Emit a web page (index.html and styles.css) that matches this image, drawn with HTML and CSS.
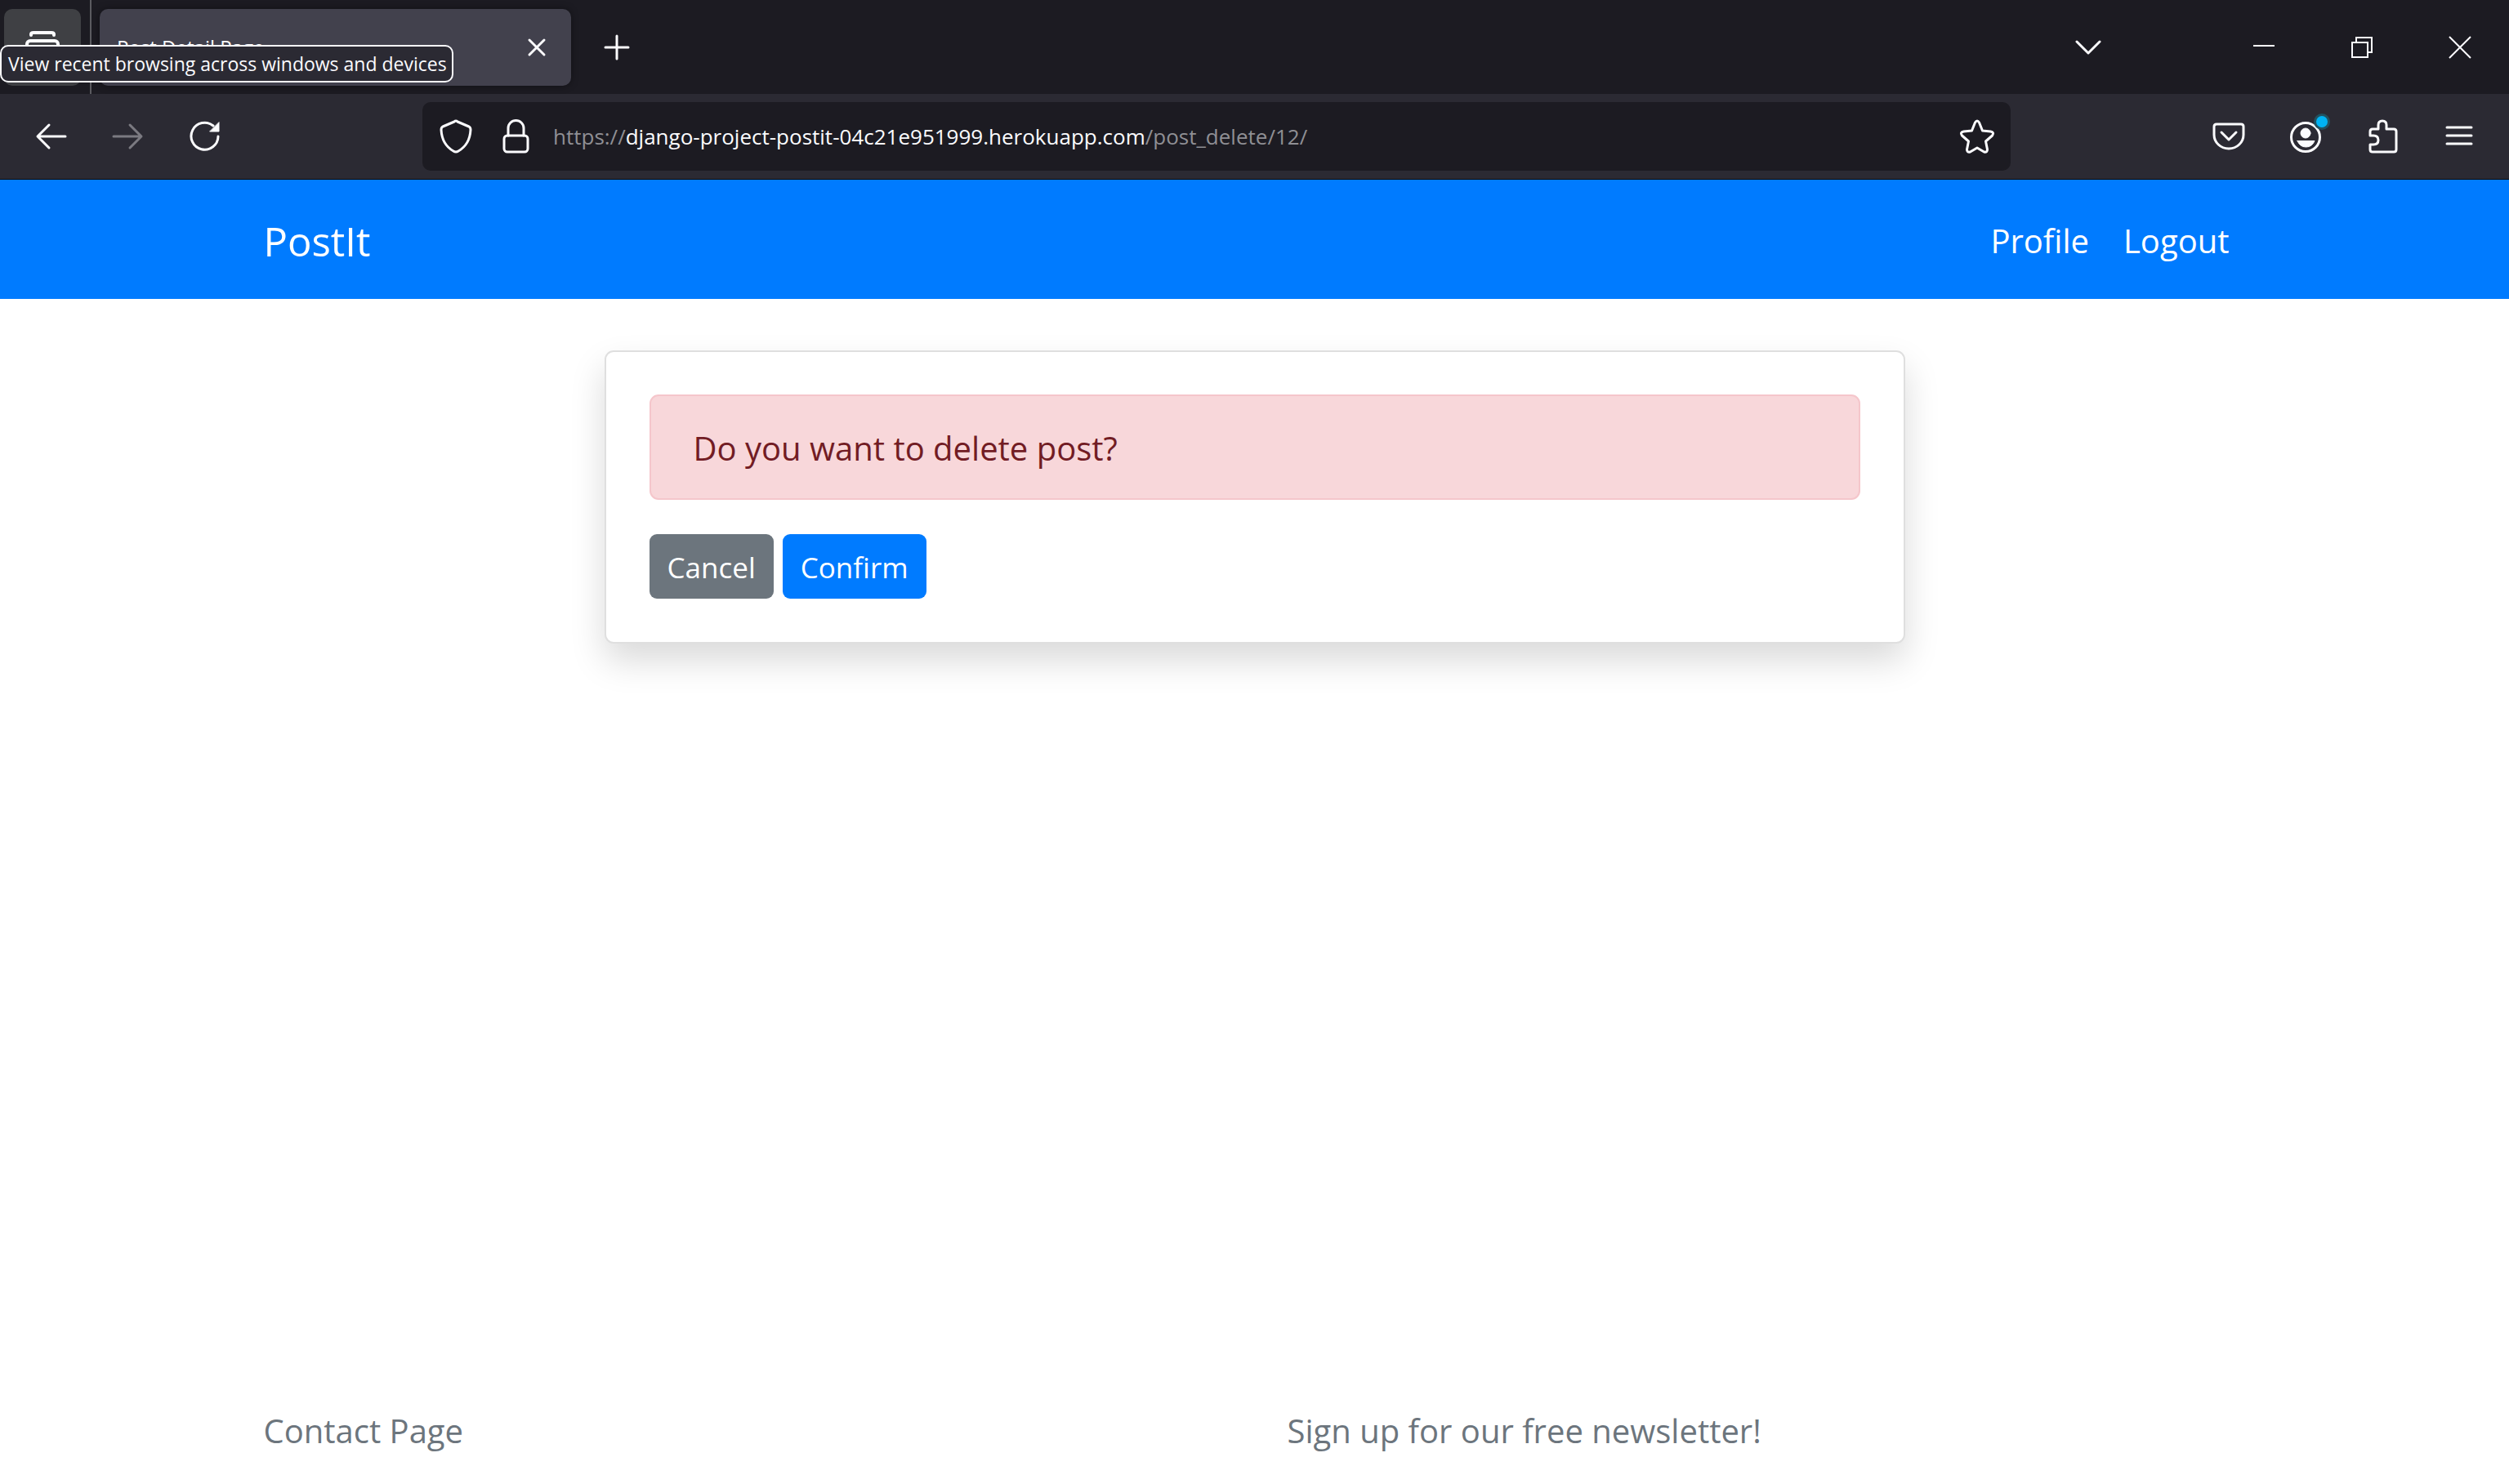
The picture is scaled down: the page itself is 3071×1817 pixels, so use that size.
FILE: index.html
```html
<!DOCTYPE html>
<html lang="en">
<head>
<meta charset="utf-8">
<title>Post Detail Page</title>
<link rel="stylesheet" href="styles.css">
</head>
<body>
<div class="browser">
  <div class="tabstrip">
    <button class="recent" aria-label="Recent browsing">
      <svg class="icon" viewBox="0 0 42 42"><path d="M7 6V5q0-2 3-2h22q3 0 3 2v1" /><rect x="2" y="13" width="38" height="27" rx="4"/></svg>
    </button>
    <div class="separator"></div>
    <div class="tab">
      <span class="tab-title">Post Detail Page</span>
      <button class="tab-close" aria-label="Close tab"><svg class="icon" viewBox="0 0 42 42"><path d="M12 12 30 30M30 12 12 30"/></svg></button>
    </div>
    <button class="tool" aria-label="New tab"><svg class="icon" viewBox="0 0 42 42"><path d="M21 7v28M7 21h28"/></svg></button>
    <button class="tool list-tabs" aria-label="List all tabs"><svg class="icon" viewBox="0 0 42 42"><path d="m7 14 14 14 14-14"/></svg></button>
    <div class="window-controls">
      <button class="window-button" aria-label="Minimize"><svg class="icon thin" viewBox="0 0 42 42"><path d="M8 19h26"/></svg></button>
      <button class="window-button" aria-label="Restore"><svg class="icon thin square" viewBox="0 0 42 42"><path d="M9 15h19v18H9zM14 15V9h19v18h-5"/></svg></button>
      <button class="window-button" aria-label="Close"><svg class="icon thin" viewBox="0 0 42 42"><path d="M8 8 34 34M34 8 8 34"/></svg></button>
    </div>
    <div class="tooltip" role="tooltip">View recent browsing across windows and devices</div>
  </div>
  <div class="toolbar">
    <button class="tool" aria-label="Back"><svg class="icon" viewBox="0 0 42 42"><path d="M38 21H5M18 7 4 21l14 14"/></svg></button>
    <button class="tool" aria-label="Forward" disabled><svg class="icon" viewBox="0 0 42 42"><path d="M3 21h33M23 7l14 14-14 14"/></svg></button>
    <button class="tool" aria-label="Reload"><svg class="icon" viewBox="0 0 42 42"><path d="M37 21A16.500 16.500 0 1 1 31 8"/><path class="solid" d="M38 4v11H27z"/></svg></button>
    <div class="urlbar">
      <button class="url-icon" aria-label="Tracking protection"><svg class="icon" viewBox="0 0 42 42"><path d="M21 2q1 0 2 1l14 6q2 1 2 4-1 18-15 26-3 2-6 0Q4 31 3 13q0-3 2-4l14-6q1-1 2-1z"/></svg></button>
      <button class="url-icon" aria-label="Site security"><svg class="icon" viewBox="0 0 42 42"><rect x="7" y="20" width="29" height="20" rx="4"/><path d="M12 20v-9a9.500 9.500 0 0 1 19 0v9"/></svg></button>
      <div class="url" role="textbox" aria-label="Address" contenteditable="true" spellcheck="false">https://<span class="domain">django-project-postit-04c21e951999.herokuapp.com</span>/post_delete/12/</div>
      <button class="url-icon" aria-label="Bookmark this page"><svg class="icon" viewBox="0 0 42 42"><path d="M18.500 4q2.500-4 5 0l4 10 10 1q5 1 2 5l-8 7 2 10q0 4-4 3l-8.500-5-8.500 5q-4 1-4-3l2-10-8-7q-3-4 2-5l10-1z"/></svg></button>
    </div>
    <button class="tool" aria-label="Save to Pocket"><svg class="icon" viewBox="0 0 42 42"><path d="M6 6h30q3 0 3 3v10a18 17 0 0 1-36 0V9q0-3 3-3z"/><path d="m12 16 9 9 9-9"/></svg></button>
    <button class="tool" aria-label="Account"><svg class="icon" viewBox="0 0 42 42"><circle cx="21" cy="22" r="17.500"/><circle class="solid" cx="21" cy="17" r="6"/><path class="solid" d="M11 26.500h21q-3 7.500-10.500 7.500T11 26.500z"/><circle class="halo" cx="41" cy="3" r="10"/><circle class="dot" cx="41" cy="3" r="7"/></svg></button>
    <button class="tool" aria-label="Extensions"><svg class="icon" viewBox="0 0 42 42"><path d="M6 20v-5q0-3 3-3h7V7q0-5 5-5t5 5v5h9q3 0 3 3v22q0 3-3 3H9q-3 0-3-3v-6h4q6 0 6-5.500T10 20z"/></svg></button>
    <button class="tool" aria-label="Open menu"><svg class="icon" viewBox="0 0 42 42"><path d="M6 10h30M6 20h30M6 30h30"/></svg></button>
  </div>
</div>
<nav class="navbar">
  <div class="container nav-row">
    <a class="brand" href="#">PostIt</a>
    <div class="nav-links"><a href="#">Profile</a><a href="#">Logout</a></div>
  </div>
</nav>
<main class="content">
  <form class="card">
    <div class="alert" role="alert">Do you want to delete post?</div>
    <div class="actions">
      <button type="button" class="btn secondary">Cancel</button>
      <button type="button" class="btn primary">Confirm</button>
    </div>
  </form>
</main>
<footer class="container footer-row">
  <a href="#">Contact Page</a>
  <a href="#">Sign up for our free newsletter!</a>
</footer>
</body>
</html>
```
FILE: styles.css
```css
* { box-sizing: border-box; }
body {
  margin: 0;
  min-height: 100vh;
  display: flex;
  flex-direction: column;
  background: #fff;
  font-family: "Open Sans", "Noto Sans", sans-serif;
  font-size: 40px;
  line-height: 64px;
  font-variant-ligatures: none;
}
button { border: 0; padding: 0; margin: 0; background: none; color: inherit; font: inherit; }
a { color: inherit; text-decoration: none; }

.browser { color: #fbfbfe; border-bottom: 1px solid #0c0c0d; }
.icon {
  display: block;
  width: 42px;
  height: 42px;
  flex: none;
  overflow: visible;
  fill: none;
  stroke: currentColor;
  stroke-width: 3;
  stroke-linecap: round;
  stroke-linejoin: round;
}
.icon.thin { stroke-width: 2; stroke-linecap: butt; }
.icon.square { stroke-linejoin: miter; }
.icon .solid { fill: currentColor; stroke-width: 1; }
.icon .halo { fill: #22515f; stroke: none; }
.icon .dot { fill: #00b3f4; stroke: none; }

.tabstrip {
  position: relative;
  display: flex;
  align-items: center;
  height: 115px;
  padding-left: 5px;
  background: #1c1b22;
}
.recent {
  display: flex;
  align-items: center;
  justify-content: center;
  width: 94px;
  height: 94px;
  border-radius: 10px;
  background: #3f4044;
}
.recent .icon { stroke-width: 4; }
.separator { width: 2px; align-self: stretch; margin: 0 10px 0 11px; background: #5b5b60; }
.tab {
  display: flex;
  align-items: center;
  justify-content: space-between;
  width: 577px;
  height: 94px;
  padding: 0 21px;
  border-radius: 10px;
  background: #42414d;
  box-shadow: 0 0 10px rgba(0, 0, 0, .4);
}
.tab-title { font-size: 24px; }
.tool {
  display: flex;
  align-items: center;
  justify-content: center;
  width: 94px;
  height: 84px;
}
.tool:disabled { color: #7b7a81; }
.tab + .tool { margin-left: 9px; }
.list-tabs { margin-left: auto; margin-right: 108px; }
.window-controls { display: flex; }
.window-button {
  display: flex;
  align-items: center;
  justify-content: center;
  width: 120px;
  height: 94px;
}
.tooltip {
  position: absolute;
  left: 0;
  top: 55px;
  padding: 1px 6px 0 8px;
  border: 2px solid #fbfbfe;
  border-radius: 10px;
  background: #2b2a33;
  font-size: 23px;
  line-height: 41px;
  white-space: nowrap;
}

.toolbar {
  display: flex;
  align-items: center;
  height: 104px;
  padding: 0 14px 0 16px;
  background: #2b2a33;
}
.urlbar {
  flex: 1;
  display: flex;
  align-items: center;
  min-width: 0;
  height: 84px;
  margin: 0 220px 0 219px;
  border-radius: 10px;
  background: #1c1b22;
}
.url-icon { display: flex; justify-content: center; width: 73px; }
.url-icon:first-child { width: 77px; padding-left: 5px; }
.url-icon:last-child { padding-right: 10px; }
.url {
  flex: 1;
  min-width: 0;
  overflow: hidden;
  padding-left: 10px;
  color: #8f8f94;
  font-size: 26px;
  line-height: 42px;
  white-space: nowrap;
}
.domain { color: #fbfbfe; }

.container { width: 100%; max-width: 2560px; margin: 0 auto; padding: 0 67px; }
.navbar { color: #fff; background: #007bff; }
.nav-row { display: flex; align-items: center; justify-content: space-between; padding-top: 39px; padding-bottom: 35px; }
.brand { font-size: 49px; line-height: 72px; }
.nav-links { display: flex; gap: 42px; padding-right: 20px; }

.content { flex: 1; padding: 63px 40px; }
.card {
  max-width: 1592px;
  margin: 0 auto;
  padding: 52px 53px 53px;
  border: 2px solid #dfdfdf;
  border-radius: 11px;
  background: #fff;
  box-shadow: 0 21px 43px rgba(0, 0, 0, .15);
}
.alert {
  padding: 32px 52px 29px;
  border: 2px solid #f5c6cb;
  border-radius: 11px;
  color: #721c24;
  background: #f8d7da;
}
.actions { display: flex; gap: 11px; margin-top: 42px; }
.btn {
  height: 79px;
  padding: 2px 22px 0;
  border-radius: 9px;
  color: #fff;
  font-size: 35px;
}
.secondary { background: #6c757d; }
.primary { background: #007bff; }

.footer-row {
  display: grid;
  grid-template-columns: 1fr 1fr;
  gap: 13px;
  padding-right: 0;
  padding-bottom: 33px;
  color: #6c757d;
}
```
